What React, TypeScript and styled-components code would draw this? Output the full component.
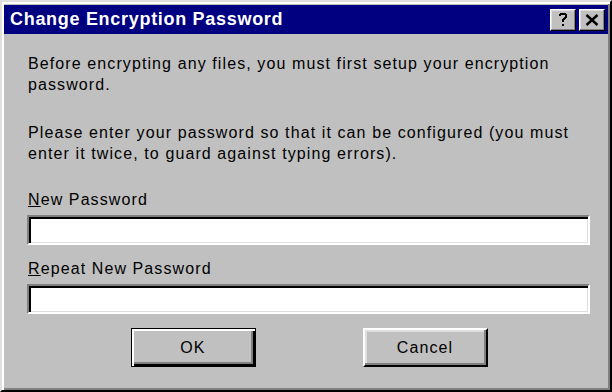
import React from 'react';
import styled, { createGlobalStyle } from 'styled-components';

const Global = createGlobalStyle`
  html, body { margin: 0; padding: 0; background: #c0c0c0; }
  body { font-family: "Liberation Sans", Arial, sans-serif; }
`;

const Window = styled.div`
  box-sizing: border-box;
  width: 612px;
  height: 392px;
  background: #c0c0c0;
  border-style: solid;
  border-width: 2px;
  border-color: #dfdfdf #000 #000 #dfdfdf;
  box-shadow: inset 2px 2px 0 #fff, inset -2px -2px 0 #808080;
  padding: 3px 2px 2px 2px;
  display: flex;
  flex-direction: column;
`;

const TitleBar = styled.div`
  height: 29px;
  flex: none;
  background: #000080;
  color: #fff;
  display: flex;
  align-items: center;
  justify-content: space-between;
  padding: 0 3px 0 6px;
  font-weight: bold;
  font-size: 18px;
  letter-spacing: 0.7px;
`;

const TitleButtons = styled.div`
  display: flex;
  gap: 3px;
`;

const TitleButton = styled.div`
  box-sizing: border-box;
  width: 26px;
  height: 22px;
  background: #c0c0c0;
  border-style: solid;
  border-width: 1px;
  border-color: #fff #000 #000 #fff;
  box-shadow: inset -1px -1px 0 #808080, inset 1px 1px 0 #dfdfdf;
  display: flex;
  align-items: center;
  justify-content: center;
  color: #000;
`;

const Body = styled.div`
  padding: 19px 18px 0 23px;
  display: flex;
  flex-direction: column;
  font-size: 16px;
  line-height: 21px;
  letter-spacing: 1.1px;
  color: #000;
`;

const Para = styled.p<{ $gap?: number }>`
  margin: ${(p) => p.$gap ?? 0}px 0 0 1px;
`;

const Label = styled.label<{ $gap: number }>`
  display: block;
  margin: ${(p) => p.$gap}px 0 5px 1px;
`;

const Field = styled.input`
  box-sizing: border-box;
  display: block;
  width: 563px;
  height: 30px;
  margin: 0;
  padding: 0 4px;
  background: #fff;
  border-style: solid;
  border-width: 2px;
  border-color: #808080 #fff #fff #808080;
  box-shadow: inset 2px 2px 0 #000, inset -1px -1px 0 #dfdfdf;
  font: inherit;
  outline: none;
`;

const ButtonRow = styled.div`
  display: flex;
  justify-content: center;
  gap: 107px;
  margin-top: 14px;
  padding-left: 1px;
`;

const Button = styled.button<{ $default?: boolean }>`
  box-sizing: border-box;
  width: 125px;
  height: 39px;
  background: #c0c0c0;
  font-family: "Liberation Sans", Arial, sans-serif;
  font-size: 16px;
  letter-spacing: 1.1px;
  color: #000;
  padding: 0;
  border-style: solid;
  border-width: ${(p) => (p.$default ? '1px' : '2px')};
  border-color: ${(p) => (p.$default ? '#000' : '#fff #000 #000 #fff')};
  box-shadow: ${(p) =>
    p.$default
      ? 'inset 2px 2px 0 #fff, inset -2px -2px 0 #000, inset -4px -4px 0 #808080'
      : 'inset -2px -2px 0 #808080, inset 2px 2px 0 #dfdfdf'};
`;

export default function App() {
  return (
    <>
      <Global />
      <Window>
        <TitleBar>
          <span>Change Encryption Password</span>
          <TitleButtons>
            <TitleButton>
              <svg width="12" height="15" viewBox="0 0 12 15">
                <path d="M2 4 V2 H3 V1 H9 V2 H10 V6 H9 V7 H8 V8 H7 V10 H5 V7 H6 V6 H7 V5 H8 V3 H4 V4 Z" fill="#000" />
                <rect x="5" y="12" width="2" height="2" fill="#000" />
              </svg>
            </TitleButton>
            <TitleButton>
              <svg width="14" height="12" viewBox="0 0 14 12">
                <path d="M1.5 1 L12.5 11 M12.5 1 L1.5 11" stroke="#000" strokeWidth="2.4" />
              </svg>
            </TitleButton>
          </TitleButtons>
        </TitleBar>
        <Body>
          <Para>
            Before encrypting any files, you must first setup your encryption
            <br />
            password.
          </Para>
          <Para $gap={27}>
            Please enter your password so that it can be configured (you must
            <br />
            enter it twice, to guard against typing errors).
          </Para>
          <Label $gap={25} htmlFor="np">
            <u>N</u>ew Password
          </Label>
          <Field id="np" type="password" />
          <Label $gap={13} htmlFor="rp">
            <u>R</u>epeat New Password
          </Label>
          <Field id="rp" type="password" />
          <ButtonRow>
            <Button $default>OK</Button>
            <Button>Cancel</Button>
          </ButtonRow>
        </Body>
      </Window>
    </>
  );
}
